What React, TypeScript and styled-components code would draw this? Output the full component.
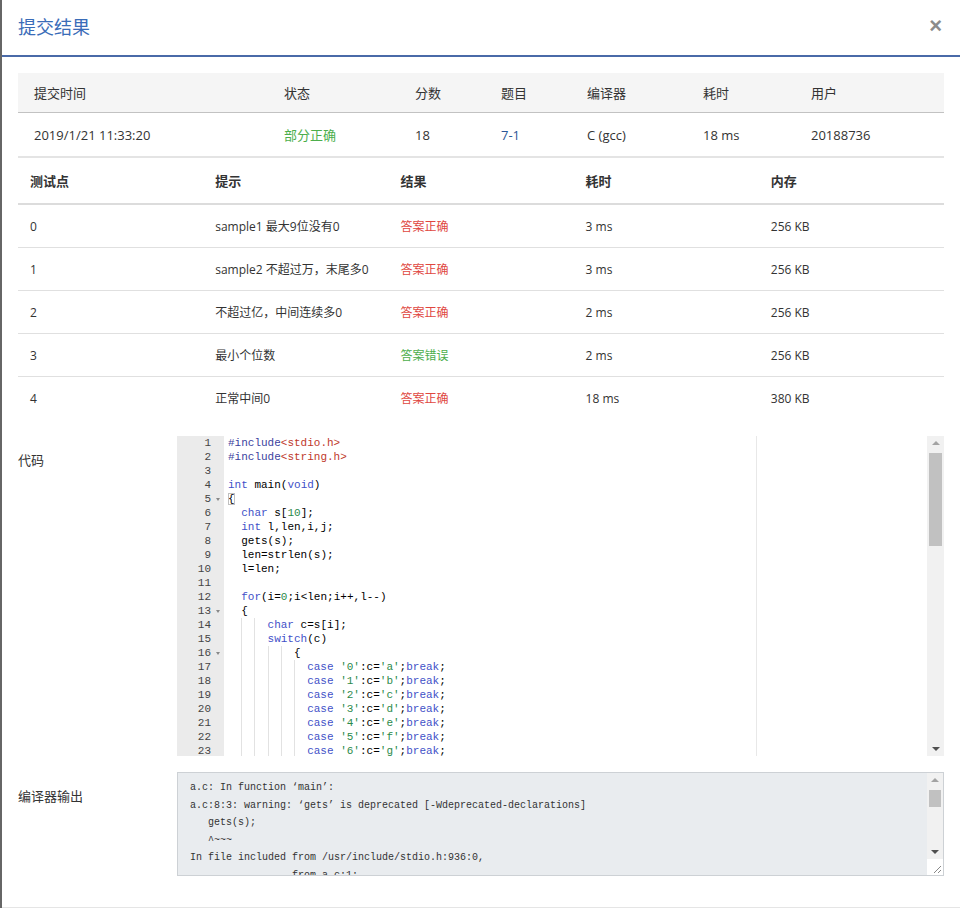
import React from 'react'
import styled, { createGlobalStyle } from 'styled-components'

const GlobalStyle = createGlobalStyle`
  html, body {
    margin: 0;
    padding: 0;
    background: #fff;
  }
  body {
    font-family: "Open Sans", "Noto Sans CJK SC", sans-serif;
    color: #333;
  }
  * { box-sizing: border-box; }
`

const summaryHead = ['提交时间', '状态', '分数', '题目', '编译器', '耗时', '用户']

const cases = [
  { id: '0', hint: 'sample1 最大9位没有0', ok: true, time: '3 ms', mem: '256 KB' },
  { id: '1', hint: 'sample2 不超过万，末尾多0', ok: true, time: '3 ms', mem: '256 KB' },
  { id: '2', hint: '不超过亿，中间连续多0', ok: true, time: '2 ms', mem: '256 KB' },
  { id: '3', hint: '最小个位数', ok: false, time: '2 ms', mem: '256 KB' },
  { id: '4', hint: '正常中间0', ok: true, time: '18 ms', mem: '380 KB' },
]

const code = [
  '#include<stdio.h>',
  '#include<string.h>',
  '',
  'int main(void)',
  '{',
  '  char s[10];',
  '  int l,len,i,j;',
  '  gets(s);',
  '  len=strlen(s);',
  '  l=len;',
  '',
  '  for(i=0;i<len;i++,l--)',
  '  {',
  '      char c=s[i];',
  '      switch(c)',
  '          {',
  "            case '0':c='a';break;",
  "            case '1':c='b';break;",
  "            case '2':c='c';break;",
  "            case '3':c='d';break;",
  "            case '4':c='e';break;",
  "            case '5':c='f';break;",
  "            case '6':c='g';break;",
]

const folds = [5, 13, 16]

const output = [
  'a.c: In function ‘main’:',
  'a.c:8:3: warning: ‘gets’ is deprecated [-Wdeprecated-declarations]',
  '   gets(s);',
  '   ^~~~',
  'In file included from /usr/include/stdio.h:936:0,',
  '                 from a.c:1:',
]

const keywords = new Set(['int', 'char', 'void', 'for', 'switch', 'case', 'break'])

type Kind = 'kw' | 'pre' | 'str' | 'lit' | 'txt'

const tokenize = (line: string) => {
  const out: { t: string; k: Kind }[] = []
  if (line.startsWith('#include')) {
    out.push({ t: '#include', k: 'pre' })
    out.push({ t: line.slice(8), k: 'str' })
    return out
  }
  const re = /('[^']*')|(\d+)|([A-Za-z_]\w*)|(.)/g
  let m: RegExpExecArray | null
  while ((m = re.exec(line))) {
    if (m[1] || m[2]) out.push({ t: m[0], k: 'lit' })
    else if (m[3]) out.push({ t: m[0], k: keywords.has(m[0]) ? 'kw' : 'txt' })
    else out.push({ t: m[0], k: 'txt' })
  }
  return out
}

const CodeLine = ({ line, n }: { line: string; n: number }) => {
  const indent = line.length - line.trimStart().length
  const rest = line.slice(indent)
  const guides = []
  for (let c = 0; c + 2 <= indent; c += 2) guides.push(<Guide key={c} $on={c > 0} />)
  const extra = indent % 2 ? ' ' : ''
  const toks = tokenize(rest)
  return (
    <Line>
      {guides}
      {extra}
      {n === 5 ? (
        <Bracket>{'{'}</Bracket>
      ) : (
        toks.map((tk, i) => (
          <Tok key={i} $k={tk.k}>
            {tk.t}
          </Tok>
        ))
      )}
    </Line>
  )
}

const App = () => {
  return (
    <>
      <GlobalStyle />
      <Modal>
        <Header>
          <Title>提交结果</Title>
          <Close>×</Close>
        </Header>
        <Body>
          <Summary>
            {summaryHead.map((h) => (
              <SumHead key={h}>{h}</SumHead>
            ))}
            <SumCell>2019/1/21 11:33:20</SumCell>
            <SumCell $color="#4cae4c">部分正确</SumCell>
            <SumCell>18</SumCell>
            <SumCell $color="#2b5797">7-1</SumCell>
            <SumCell>C (gcc)</SumCell>
            <SumCell>18 ms</SumCell>
            <SumCell>20188736</SumCell>
          </Summary>

          <Cases>
            <CaseHead>测试点</CaseHead>
            <CaseHead>提示</CaseHead>
            <CaseHead>结果</CaseHead>
            <CaseHead>耗时</CaseHead>
            <CaseHead>内存</CaseHead>
            {cases.map((c, i) => (
              <React.Fragment key={c.id}>
                <CaseCell $last={i === cases.length - 1}>{c.id}</CaseCell>
                <CaseCell $last={i === cases.length - 1}>{c.hint}</CaseCell>
                <CaseCell $last={i === cases.length - 1} $color={c.ok ? '#e0473f' : '#4cae4c'}>
                  {c.ok ? '答案正确' : '答案错误'}
                </CaseCell>
                <CaseCell $last={i === cases.length - 1}>{c.time}</CaseCell>
                <CaseCell $last={i === cases.length - 1}>{c.mem}</CaseCell>
              </React.Fragment>
            ))}
          </Cases>

          <FormRow>
            <Label>代码</Label>
            <Editor>
              <Gutter>
                {code.map((_, i) => (
                  <GutterCell key={i}>
                    {i + 1}
                    {folds.includes(i + 1) && <Fold />}
                  </GutterCell>
                ))}
              </Gutter>
              <CodeArea>
                {code.map((l, i) => (
                  <CodeLine key={i} line={l} n={i + 1} />
                ))}
              </CodeArea>
              <PrintMargin />
              <ScrollTrack>
                <ArrowUp $dim />
                <Thumb $top={17} $h={93} />
                <ArrowDown />
              </ScrollTrack>
            </Editor>
          </FormRow>

          <FormRow>
            <Label>编译器输出</Label>
            <Output>
              <OutputText>{output.join('\n')}</OutputText>
              <OutTrack>
                <ArrowUp $dim />
                <Thumb $top={17} $h={17} />
                <ArrowDown />
              </OutTrack>
              <Resize>
                <svg width="10" height="10" viewBox="0 0 10 10">
                  <path d="M9 2 L2 9 M9 6 L6 9" stroke="#888" strokeWidth="1" fill="none" />
                </svg>
              </Resize>
            </Output>
          </FormRow>
        </Body>
        <Footer />
      </Modal>
    </>
  )
}

export default App

const Modal = styled.div`
  min-height: 100vh;
  border-left: 2px solid #666;
  display: flex;
  flex-direction: column;
`

const Header = styled.div`
  height: 57px;
  padding: 0 18px 0 16px;
  border-bottom: 2px solid #4a6aa8;
  display: flex;
  align-items: center;
  justify-content: space-between;
`

const Title = styled.div`
  font-size: 18px;
  color: #3a6cb8;
  font-family: "Noto Sans CJK SC", sans-serif;
  font-weight: 400;
  line-height: 1;
  margin-top: -3px;
`

const Close = styled.div`
  font-family: "Liberation Sans", sans-serif;
  font-size: 22px;
  font-weight: 700;
  color: #8c8c8c;
  line-height: 1;
  margin-top: -3px;
`

const Body = styled.div`
  padding: 16px 16px 31px 16px;
`

const Summary = styled.div`
  display: grid;
  grid-template-columns: 250px 131px 86px 86px 116px 108px 1fr;
  font-size: 13px;
`

const SumHead = styled.div`
  height: 40px;
  background: #f5f5f5;
  border-bottom: 1px solid #c2c2c2;
  padding-left: 16px;
  display: flex;
  align-items: center;
  color: #333;
`

const SumCell = styled.div<{ $color?: string }>`
  height: 45px;
  border-bottom: 2px solid #e4e4e4;
  padding-left: 16px;
  display: flex;
  align-items: center;
  color: ${(p) => p.$color || '#333'};
`

const Cases = styled.div`
  display: grid;
  grid-template-columns: repeat(5, 1fr);
`

const CaseHead = styled.div`
  height: 47px;
  border-bottom: 2px solid #dcdcdc;
  padding-left: 12px;
  display: flex;
  align-items: center;
  font-size: 13px;
  font-weight: 700;
  color: #333;
`

const CaseCell = styled.div<{ $color?: string; $last?: boolean }>`
  height: 43px;
  border-bottom: ${(p) => (p.$last ? '0' : '1px solid #e0e0e0')};
  padding-left: 12px;
  padding-bottom: ${(p) => (p.$last ? '1px' : '0')};
  display: flex;
  align-items: center;
  font-size: 12px;
  color: ${(p) => p.$color || '#333'};
`

const FormRow = styled.div`
  display: grid;
  grid-template-columns: 159px 1fr;
  margin-top: 16px;
`

const Label = styled.div`
  font-size: 13px;
  color: #333;
  padding-top: 14px;
  line-height: 20px;
`

const Editor = styled.div`
  position: relative;
  height: 320px;
  overflow: hidden;
  display: flex;
  background: #fff;
  font-family: "Liberation Mono", monospace;
  font-size: 11px;
  line-height: 14px;
`

const Gutter = styled.div`
  width: 47px;
  flex: none;
  background: #ebebeb;
  color: #444;
`

const GutterCell = styled.div`
  position: relative;
  height: 14px;
  text-align: right;
  padding-right: 13px;
`

const Fold = styled.span`
  position: absolute;
  right: 4px;
  top: 6px;
  border-left: 2.5px solid transparent;
  border-right: 2.5px solid transparent;
  border-top: 3px solid #888;
`

const CodeArea = styled.div`
  padding-left: 4px;
  flex: 1;
  color: #000;
`

const Line = styled.div`
  height: 14px;
  white-space: pre;
`

const Guide = styled.span<{ $on: boolean }>`
  display: inline-block;
  width: 2ch;
  height: 14px;
  vertical-align: top;
  border-left: ${(p) => (p.$on ? '1px solid #e2e2e2' : '0')};
`

const tokColor: Record<Kind, string> = {
  kw: '#3f51c8',
  pre: '#3b3f9e',
  str: '#c0392b',
  lit: '#2b8a4a',
  txt: '#000',
}

const Tok = styled.span<{ $k: Kind }>`
  color: ${(p) => tokColor[p.$k]};
`

const Bracket = styled.span`
  outline: 1px solid #c0c0c0;
  outline-offset: -1px;
`

const PrintMargin = styled.div`
  position: absolute;
  left: 579px;
  top: 0;
  bottom: 0;
  width: 1px;
  background: #e8e8e8;
`

const ScrollTrack = styled.div`
  position: absolute;
  right: 0;
  top: 0;
  bottom: 0;
  width: 17px;
  background: #f1f1f1;
`

const OutTrack = styled.div`
  position: absolute;
  right: 0;
  top: 0;
  bottom: 16px;
  width: 16px;
  background: #f1f1f1;
`

const ArrowUp = styled.div<{ $dim?: boolean }>`
  position: absolute;
  top: 5px;
  left: 50%;
  margin-left: -4px;
  border-left: 4px solid transparent;
  border-right: 4px solid transparent;
  border-bottom: 4px solid ${(p) => (p.$dim ? '#a3a3a3' : '#505050')};
`

const ArrowDown = styled.div`
  position: absolute;
  bottom: 5px;
  left: 50%;
  margin-left: -4px;
  border-left: 4px solid transparent;
  border-right: 4px solid transparent;
  border-top: 4px solid #505050;
`

const Thumb = styled.div<{ $top: number; $h: number }>`
  position: absolute;
  left: 2px;
  right: 2px;
  top: ${(p) => p.$top}px;
  height: ${(p) => p.$h}px;
  background: #c1c1c1;
`

const Output = styled.div`
  position: relative;
  height: 104px;
  border: 1px solid #cdd1d5;
  background: #e9ecef;
  overflow: hidden;
`

const OutputText = styled.div`
  white-space: pre;
  font-family: "Liberation Mono", monospace;
  font-size: 10px;
  line-height: 17.5px;
  color: #333;
  padding: 6px 12px;
`

const Resize = styled.div`
  position: absolute;
  right: 0;
  bottom: 0;
  width: 16px;
  height: 16px;
  background: #fff;
  display: flex;
  align-items: flex-end;
  justify-content: flex-end;
  padding: 1px;
`

const Footer = styled.div`
  flex: 1;
  border-top: 1px solid #e5e5e5;
`
